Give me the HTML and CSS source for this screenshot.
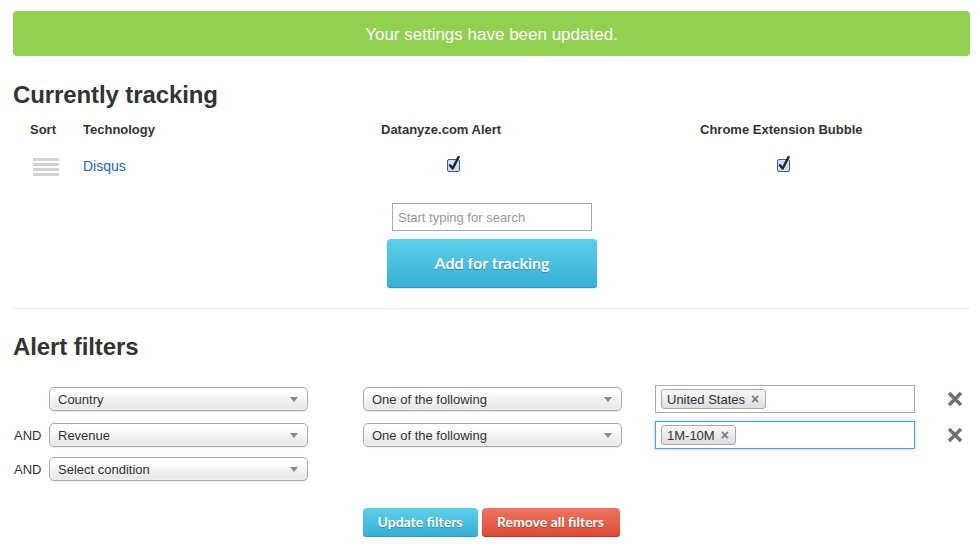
FILE: index.html
```html
<!DOCTYPE html>
<html>
<head>
<meta charset="utf-8">
<link rel="stylesheet" href="styles.css">
</head>
<body>
<div class="page">
  <div class="banner">Your settings have been updated.</div>

  <h2 class="title first">Currently tracking</h2>

  <div class="track">
    <div class="th c1">Sort</div>
    <div class="th c2">Technology</div>
    <div class="th c3">Datanyze.com Alert</div>
    <div class="th c4">Chrome Extension Bubble</div>

    <div class="td c1"><span class="handle"><i></i><i></i><i></i><i></i></span></div>
    <div class="td c2"><a class="tech" href="#">Disqus</a></div>
    <div class="td c3"><span class="cb cb3"><svg width="14" height="16" viewBox="0 0 14 16"><rect x="0.5" y="3.5" width="12" height="12" rx="1.5" fill="#cfe0f5" stroke="#4a5b7c"/><path d="M3 9.2 L5.6 12.6 L11.6 1" fill="none" stroke="#1b2640" stroke-width="2.4" stroke-linecap="round" stroke-linejoin="round"/></svg></span></div>
    <div class="td c4"><span class="cb cb4"><svg width="14" height="16" viewBox="0 0 14 16"><rect x="0.5" y="3.5" width="12" height="12" rx="1.5" fill="#cfe0f5" stroke="#4a5b7c"/><path d="M3 9.2 L5.6 12.6 L11.6 1" fill="none" stroke="#1b2640" stroke-width="2.4" stroke-linecap="round" stroke-linejoin="round"/></svg></span></div>
  </div>

  <div class="add">
    <div class="search">Start typing for search</div>
    <button class="btn btn-blue btn-big">Add for tracking</button>
  </div>

  <div class="rule"></div>

  <h2 class="title second">Alert filters</h2>

  <div class="filters">
    <div class="frow tall">
      <span class="and"></span>
      <div class="sel s1"><span>Country</span><b class="arrow"></b></div>
      <div class="sel s2"><span>One of the following</span><b class="arrow"></b></div>
      <div class="tags"><span class="tag">United States <b>×</b></span></div>
      <span class="del"><svg width="16" height="16" viewBox="0 0 16 16"><path d="M2 2 L14 14 M14 2 L2 14" stroke="#6f6f6f" stroke-width="3.4"/></svg></span>
    </div>
    <div class="frow tall">
      <span class="and">AND</span>
      <div class="sel s1"><span>Revenue</span><b class="arrow"></b></div>
      <div class="sel s2"><span>One of the following</span><b class="arrow"></b></div>
      <div class="tags focus"><span class="tag">1M-10M <b>×</b></span></div>
      <span class="del"><svg width="16" height="16" viewBox="0 0 16 16"><path d="M2 2 L14 14 M14 2 L2 14" stroke="#6f6f6f" stroke-width="3.4"/></svg></span>
    </div>
    <div class="frow">
      <span class="and">AND</span>
      <div class="sel s1"><span>Select condition</span><b class="arrow"></b></div>
    </div>
  </div>

  <div class="actions">
    <button class="btn btn-blue btn-small">Update filters</button>
    <button class="btn btn-red btn-small">Remove all filters</button>
  </div>
</div>
</body>
</html>
```
FILE: styles.css
```css
* { box-sizing: border-box; }
html, body { margin: 0; padding: 0; background: #fff; }
body {
  font-family: "Liberation Sans", Arial, Helvetica, sans-serif;
  font-size: 13px;
  color: #333;
}
.page {
  width: 980px;
  padding: 11px 10px 0 13px;
}
.banner {
  height: 45px;
  background: #92d14f;
  border-radius: 4px;
  color: #fff;
  font-size: 17px;
  display: flex;
  align-items: center;
  justify-content: center;
  padding-top: 2px;
}
.title {
  margin: 0;
  font-size: 24px;
  line-height: 28px;
  font-weight: bold;
  color: #333;
  letter-spacing: -0.1px;
}
.title.first { margin-top: 25px; }
.title.second { margin-top: 24px; }

.track {
  margin-top: 5px;
  display: grid;
  grid-template-columns: 60px 308px 319px 1fr;
  grid-template-rows: 30px 44px;
  align-items: center;
}
.th { font-weight: bold; color: #333; }
.th.c1 { padding-left: 17px; }
.c2 { padding-left: 10px; }
.td { display: flex; align-items: center; }
.handle {
  margin-left: 20px;
  width: 26px;
  display: flex;
  flex-direction: column;
  gap: 2px;
  padding-top: 1px;
}
.handle i {
  display: block;
  height: 3px;
  background: #d3d3d3;
}
.tech {
  color: #1c5fcf;
  text-decoration: none;
  font-size: 14px;
}
.cb { display: inline-block; height: 16px; margin-top: -4px; }
.cb svg { display: block; }
.cb3 { margin-left: 66px; }
.cb4 { margin-left: 77px; }

.add {
  margin-top: 15px;
  display: flex;
  flex-direction: column;
  align-items: center;
  padding-left: 1px;
}
.search {
  width: 200px;
  height: 28px;
  border: 1px solid #aaa;
  color: #999;
  font-size: 13px;
  line-height: 27px;
  padding-left: 5px;
}
.btn {
  font-family: Lato, "Open Sans", "Liberation Sans", sans-serif;
  font-weight: 700;
  color: #fff;
  border: 0;
  border-radius: 4px;
  padding: 0;
  text-shadow: 0 1px 1px rgba(0,0,0,0.25);
  cursor: pointer;
}
.btn-blue {
  background: linear-gradient(#5dd0e8, #38aed6);
  box-shadow: inset 0 -1px 0 #2d97bd, 0 1px 1px rgba(0,0,0,0.12);
}
.btn-red {
  background: linear-gradient(#ef7561, #dc4a38);
  box-shadow: inset 0 -1px 0 #bb3a2b, 0 1px 1px rgba(0,0,0,0.12);
}
.btn-big {
  margin-top: 8px;
  width: 210px;
  height: 49px;
  font-size: 16px;
  padding-bottom: 3px;
}
.rule {
  margin-top: 20px;
  height: 1px;
  background: #ebebeb;
}

.filters {
  margin-top: 24px;
  display: flex;
  flex-direction: column;
  gap: 8px;
}
.frow {
  display: flex;
  align-items: center;
  height: 24px;
}
.frow.tall { height: 28px; }
.and {
  width: 36px;
  flex: none;
  padding-left: 1px;
  font-size: 13px;
  color: #333;
}
.sel {
  flex: none;
  width: 259px;
  height: 24px;
  border: 1px solid #aaa;
  border-radius: 5px;
  background: linear-gradient(#ffffff 20%, #f0f0f0 60%, #e6e6e6);
  display: flex;
  align-items: center;
  justify-content: space-between;
  padding: 0 9px 0 8px;
  font-size: 13px;
  color: #333;
  box-shadow: 0 0 3px #fff inset, 0 1px 1px rgba(0,0,0,0.08);
}
.s2 { margin-left: 55px; }
.arrow {
  width: 0;
  height: 0;
  border-left: 4px solid transparent;
  border-right: 4px solid transparent;
  border-top: 5px solid #888;
}
.tags {
  flex: none;
  margin-left: 33px;
  width: 260px;
  height: 28px;
  border: 1px solid #aaa;
  display: flex;
  align-items: center;
  padding-left: 5px;
  background: #fff;
}
.tags.focus {
  border-color: #5897fb;
  box-shadow: 0 0 3px rgba(88,151,251,0.5);
}
.tag {
  height: 20px;
  border: 1px solid #aaa;
  border-radius: 3px;
  background: linear-gradient(#f4f4f4 20%, #e8e8e8 60%, #dedede);
  display: inline-flex;
  align-items: center;
  padding: 0 6px 0 5px;
  font-size: 13px;
  color: #333;
}
.tag b {
  margin-left: 6px;
  color: #777;
  font-size: 14px;
  font-weight: bold;
}
.del {
  margin-left: 32px;
  width: 16px;
  height: 16px;
  display: block;
}
.del svg { display: block; }

.actions {
  margin-top: 27px;
  display: flex;
  justify-content: center;
  gap: 4px;
  padding-right: 1px;
}
.btn-small {
  height: 29px;
  font-size: 14px;
  padding-bottom: 2px;
}
.btn-blue.btn-small { width: 115px; }
.btn-red.btn-small { width: 138px; }
```
